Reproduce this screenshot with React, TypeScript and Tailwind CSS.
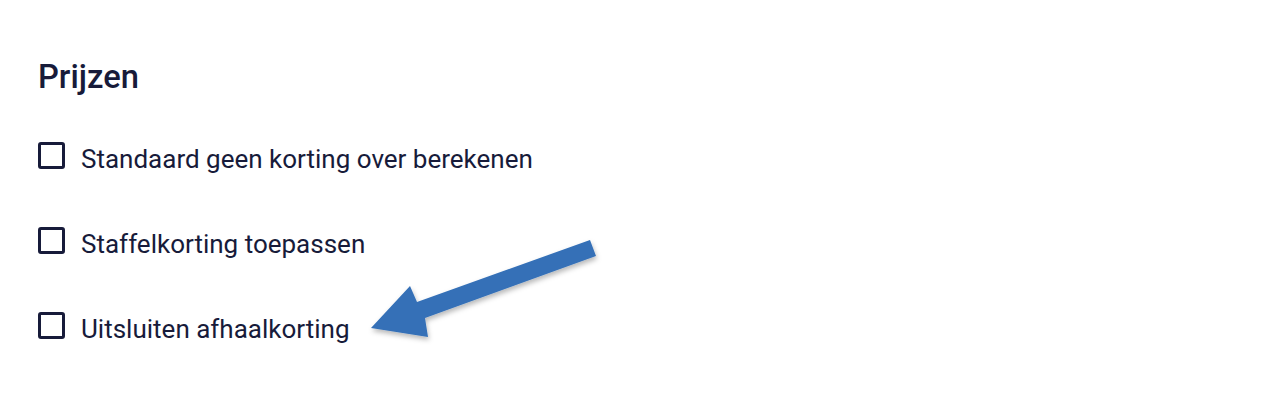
import React from "react";

type Option = {
  id: string;
  label: string;
};

const options: Option[] = [
  { id: "no-discount", label: "Standaard geen korting over berekenen" },
  { id: "tier-discount", label: "Staffelkorting toepassen" },
  { id: "no-pickup", label: "Uitsluiten afhaalkorting" },
];

const Arrow: React.FC = () => (
  <svg
    className="absolute left-0 top-0 pointer-events-none"
    width={1280}
    height={405}
    viewBox="0 0 1280 405"
  >
    <defs>
      <filter id="arrowShadow" x="-10%" y="-10%" width="120%" height="130%">
        <feDropShadow dx="1" dy="3" stdDeviation="2.5" floodColor="#000" floodOpacity="0.28" />
      </filter>
    </defs>
    <polygon
      points="590,240 596,256 425,318 428,337 371,328 410,286 417,302"
      fill="#3470b7"
      filter="url(#arrowShadow)"
    />
  </svg>
);

const App: React.FC = () => {
  return (
    <div
      className="relative w-[1280px] h-[405px] bg-white overflow-hidden text-[#171b3a]"
      style={{ fontFamily: "Roboto, 'Noto Sans', sans-serif" }}
    >
      <div className="flex flex-col pl-[38px] pt-[58px]">
        <h2 className="text-[32.7px] leading-[38px] font-medium">Prijzen</h2>
        <div className="flex flex-col gap-[52px] mt-[46px]">
          {options.map((opt) => (
            <label key={opt.id} className="flex items-start gap-[16px] cursor-pointer">
              <span className="w-[27px] h-[27px] border-[3px] border-[#171b3a] rounded-[3px] shrink-0"></span>
              <span className="text-[26px] leading-[32px] mt-[1px]">{opt.label}</span>
            </label>
          ))}
        </div>
      </div>
      <Arrow />
    </div>
  );
};

export default App;
